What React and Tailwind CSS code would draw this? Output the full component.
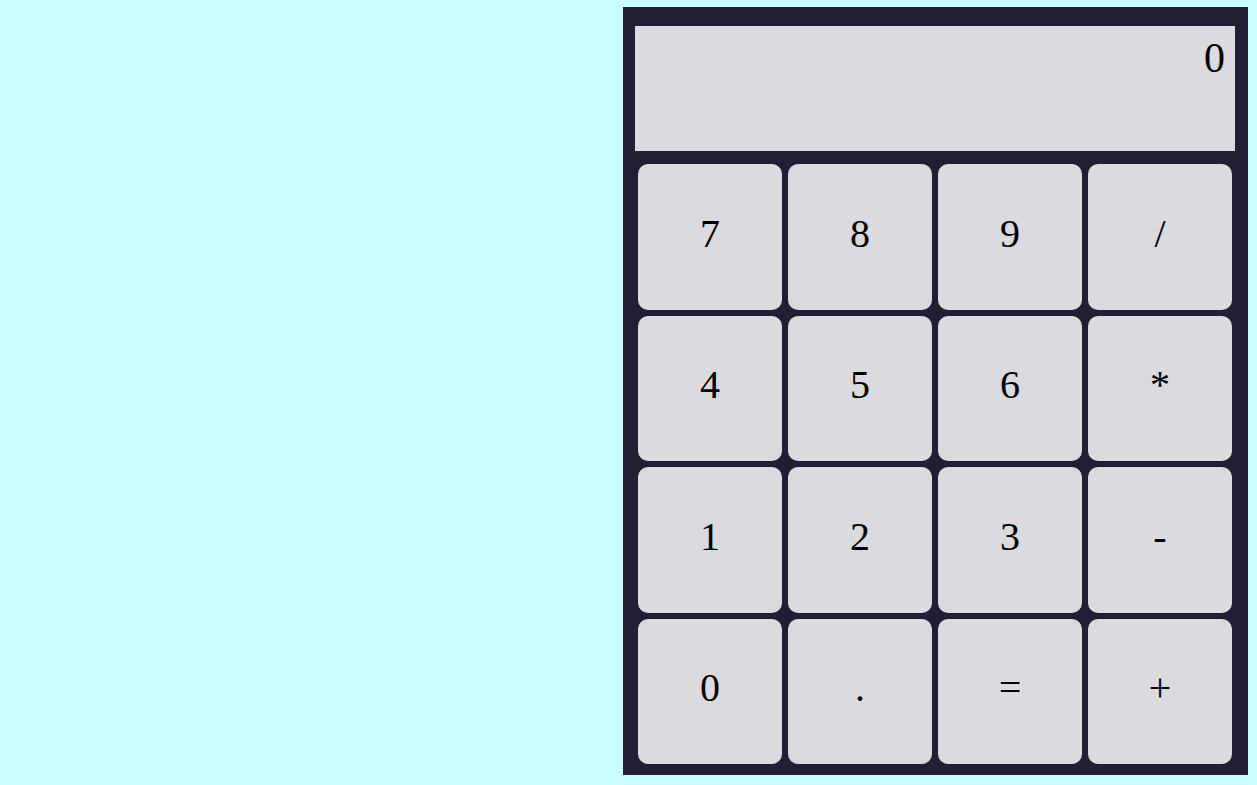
export default function App() {
  const keys = ["7", "8", "9", "/", "4", "5", "6", "*", "1", "2", "3", "-", "0", ".", "=", "+"];
  return (
    <div className="w-full h-[785px] bg-[#c9ffff] flex justify-end items-start pt-[7px] pr-[9px]" style={{ fontFamily: '"Liberation Serif", serif' }}>
      <div className="w-[625px] h-[768px] bg-[#201f33] flex flex-col pt-[19px] pl-[12px] pr-[13px]">
        <div className="h-[125px] bg-[#dadadf] text-right pr-[10px] pt-[8px] text-[42px] leading-[48px] text-black">0</div>
        <div className="mt-[13px] mx-[3px] h-[600px] grid grid-cols-4 grid-rows-4 gap-[6px]">
          {keys.map((k) => (
            <button key={k} className="bg-[#dadadf] rounded-[10px] flex items-center justify-center text-[40px] leading-none text-black pb-[6px]">
              {k}
            </button>
          ))}
        </div>
      </div>
    </div>
  );
}
